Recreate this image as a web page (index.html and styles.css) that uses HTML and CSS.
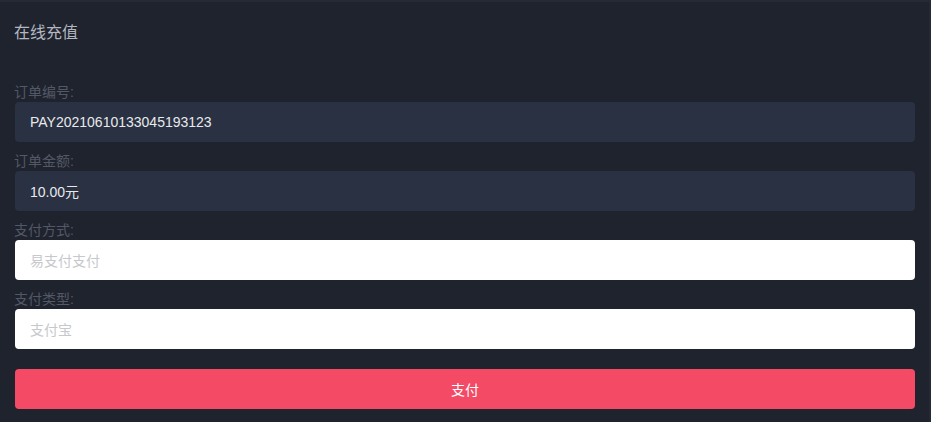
FILE: index.html
```html
<!DOCTYPE html>
<html lang="zh-CN">
<head>
<meta charset="utf-8">
<title>在线充值</title>
<link rel="stylesheet" href="styles.css">
</head>
<body>
<div class="page">
  <h1 class="title">在线充值</h1>
  <form class="form">
    <div class="field">
      <label class="label">订单编号:</label>
      <div class="box box-dark">PAY20210610133045193123</div>
    </div>
    <div class="field">
      <label class="label">订单金额:</label>
      <div class="box box-dark">10.00元</div>
    </div>
    <div class="field">
      <label class="label">支付方式:</label>
      <div class="box box-light">易支付支付</div>
    </div>
    <div class="field">
      <label class="label">支付类型:</label>
      <div class="box box-light">支付宝</div>
    </div>
    <button type="button" class="pay">支付</button>
  </form>
</div>
</body>
</html>
```
FILE: styles.css
```css
html, body {
  margin: 0;
  padding: 0;
  background: #1f232e;
}
body {
  font-family: "Liberation Sans", "Noto Sans CJK SC", Arial, sans-serif;
  height: 422px;
  overflow: hidden;
}
.page {
  border-top: 2px solid #262a34;
  border-right: 2px solid #252933;
  height: 420px;
  padding: 0 14px 0 15px;
}
.title {
  margin: 0;
  padding-top: 20px;
  font-size: 16px;
  font-weight: normal;
  line-height: 22px;
  color: #b3b7c0;
  margin-left: -1px;
}
.form {
  margin-top: 38px;
  display: flex;
  flex-direction: column;
}
.field {
  display: flex;
  flex-direction: column;
  margin-bottom: 9px;
}
.label {
  font-size: 14px;
  line-height: 20px;
  color: #535866;
  margin-left: -1px;
}
.box {
  height: 40px;
  box-sizing: border-box;
  border-radius: 4px;
  padding: 0 15px;
  display: flex;
  align-items: center;
  font-size: 14px;
}
.box-dark {
  background: #2a3142;
  color: #e8e9ec;
}
.box-light {
  background: #ffffff;
  color: #c6c8cc;
}
.pay {
  margin-top: 11px;
  height: 40px;
  border: none;
  border-radius: 4px;
  background: #f44a65;
  color: #ffffff;
  font-family: inherit;
  font-size: 14px;
  cursor: pointer;
}
```
